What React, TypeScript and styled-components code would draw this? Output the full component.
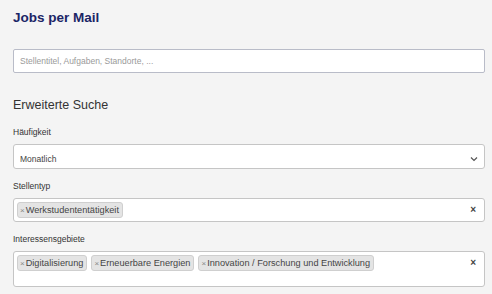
import styled, { createGlobalStyle } from 'styled-components';

const GlobalStyle = createGlobalStyle`
  html, body {
    margin: 0;
    padding: 0;
    background: #f4f4f4;
    font-family: "Liberation Sans", Arial, sans-serif;
  }
`;

const Page = styled.div`
  padding: 9px 7px 0 13px;
  color: #333;
`;

const Title = styled.h1`
  margin: 0;
  font-size: 13.5px;
  font-weight: 700;
  line-height: 17px;
  color: #1b2566;
`;

const SearchInput = styled.div`
  margin-top: 23px;
  height: 24px;
  box-sizing: border-box;
  display: flex;
  align-items: center;
  padding: 0 6px;
  background: #fff;
  border: 1px solid #b9bcc8;
  border-radius: 2px;
  font-size: 8.5px;
  color: #9a9a9a;
`;

const SectionTitle = styled.h2`
  margin: 25px 0 0;
  font-size: 12.5px;
  font-weight: 400;
  line-height: 15px;
  color: #333;
`;

const Field = styled.div<{ $top: number }>`
  margin-top: ${(p) => p.$top}px;
`;

const Label = styled.div`
  font-size: 8.5px;
  line-height: 10px;
  color: #333;
  margin-bottom: 7px;
`;

const Box = styled.div<{ $height: number }>`
  height: ${(p) => p.$height}px;
  box-sizing: border-box;
  background: #fff;
  border: 1px solid #c5c5c5;
  border-radius: 3px;
  display: flex;
  align-items: flex-start;
  padding: 3px 6px 0 3px;
`;

const SelectValue = styled.div`
  flex: 1;
  font-size: 8.5px;
  color: #444;
  line-height: 22px;
  padding-left: 3px;
`;

const Tags = styled.div`
  flex: 1;
  display: flex;
  flex-wrap: wrap;
  gap: 4px;
`;

const Tag = styled.span`
  display: inline-flex;
  align-items: center;
  height: 16px;
  box-sizing: border-box;
  padding: 0 3px 0 2px;
  background: #e4e4e4;
  border: 1px solid #cfcfcf;
  border-radius: 3px;
  font-size: 9.2px;
  color: #444;
`;

const TagX = styled.span`
  font-size: 8px;
  color: #888;
  margin-right: 1px;
`;

const Clear = styled.span`
  font-size: 10px;
  font-weight: 700;
  color: #444;
  line-height: 16px;
  padding-right: 2px;
`;

const Chevron = styled.svg`
  margin-top: 8px;
`;

const tags = ['Digitalisierung', 'Erneuerbare Energien', 'Innovation / Forschung und Entwicklung'];

const App = () => (
  <>
    <GlobalStyle />
    <Page>
      <Title>Jobs per Mail</Title>
      <SearchInput>Stellentitel, Aufgaben, Standorte, ...</SearchInput>
      <SectionTitle>Erweiterte Suche</SectionTitle>
      <Field $top={14}>
        <Label>Häufigkeit</Label>
        <Box $height={25}>
          <SelectValue>Monatlich</SelectValue>
          <Chevron width="8" height="6" viewBox="0 0 8 6">
            <path d="M1 1.5 L4 4.5 L7 1.5" fill="none" stroke="#555" strokeWidth="1.2" />
          </Chevron>
        </Box>
      </Field>
      <Field $top={12}>
        <Label>Stellentyp</Label>
        <Box $height={24}>
          <Tags>
            <Tag>
              <TagX>×</TagX>Werkstudententätigkeit
            </Tag>
          </Tags>
          <Clear>×</Clear>
        </Box>
      </Field>
      <Field $top={12}>
        <Label>Interessensgebiete</Label>
        <Box $height={36}>
          <Tags>
            {tags.map((t) => (
              <Tag key={t}>
                <TagX>×</TagX>
                {t}
              </Tag>
            ))}
          </Tags>
          <Clear>×</Clear>
        </Box>
      </Field>
    </Page>
  </>
);

export default App;
